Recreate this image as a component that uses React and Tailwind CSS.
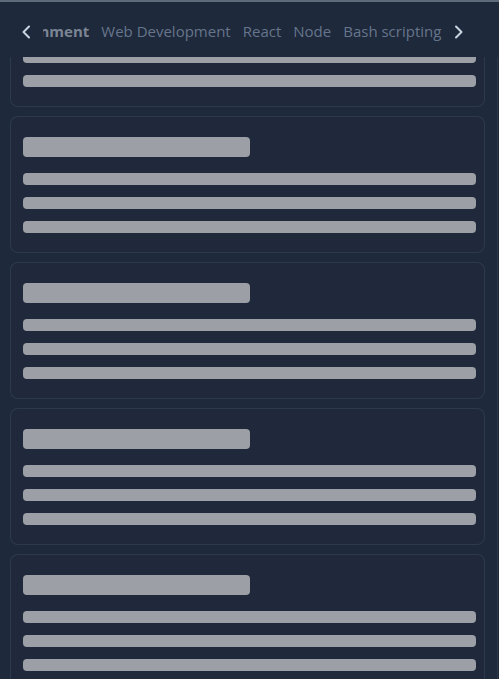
import React from 'react';

const tabs = ['Web Development', 'React', 'Node', 'Bash scripting'];

function Chevron({ dir }) {
  return (
    <svg width="10" height="14" viewBox="0 0 10 14" fill="none" className="text-slate-300">
      {dir === 'left' ? (
        <path d="M8 1.5 2.5 7 8 12.5" stroke="currentColor" strokeWidth="2" strokeLinecap="round" strokeLinejoin="round" />
      ) : (
        <path d="M2 1.5 7.5 7 2 12.5" stroke="currentColor" strokeWidth="2" strokeLinecap="round" strokeLinejoin="round" />
      )}
    </svg>
  );
}

function SkeletonCard() {
  return (
    <div className="rounded-lg border border-[#334155]/70 bg-[#1f293b] pb-[19px] pl-3 pr-2 pt-5">
      <div className="h-5 w-[227px] rounded bg-[#9ca0a6]" />
      <div className="mt-4 flex flex-col gap-3">
        <div className="h-3 rounded bg-[#9ca0a6]" />
        <div className="h-3 rounded bg-[#9ca0a6]" />
        <div className="h-3 rounded bg-[#9ca0a6]" />
      </div>
    </div>
  );
}

export default function App() {
  return (
    <div className="relative h-[679px] w-[499px] overflow-hidden bg-[#1e293b] font-['Open_Sans','Noto_Sans',sans-serif]">
      <div className="absolute inset-x-0 top-0 z-10 flex h-[57px] items-center border-t-2 border-[#5d6a7a] bg-[#1e293b] pt-1">
        <div className="flex w-[43px] shrink-0 justify-center pl-2">
          <Chevron dir="left" />
        </div>
        <div className="relative min-w-0 flex-1 overflow-hidden">
          <div className="ml-[-51px] flex items-center gap-3 whitespace-nowrap text-[15px]">
            <span className="font-bold text-[#7b8594]">Environment</span>
            {tabs.map((t) => (
              <span key={t} className="text-[#66758b]">{t}</span>
            ))}
          </div>
        </div>
        <div className="flex w-[51px] shrink-0 justify-start pl-[6px]">
          <Chevron dir="right" />
        </div>
      </div>
      <div className="mt-[-30px] flex flex-col gap-[9px] pl-[10px] pr-[14px]">
        <SkeletonCard />
        <SkeletonCard />
        <SkeletonCard />
        <SkeletonCard />
        <SkeletonCard />
        <SkeletonCard />
      </div>
      <div className="absolute inset-y-0 right-[1px] w-px bg-[#2b3648]" />
    </div>
  );
}
